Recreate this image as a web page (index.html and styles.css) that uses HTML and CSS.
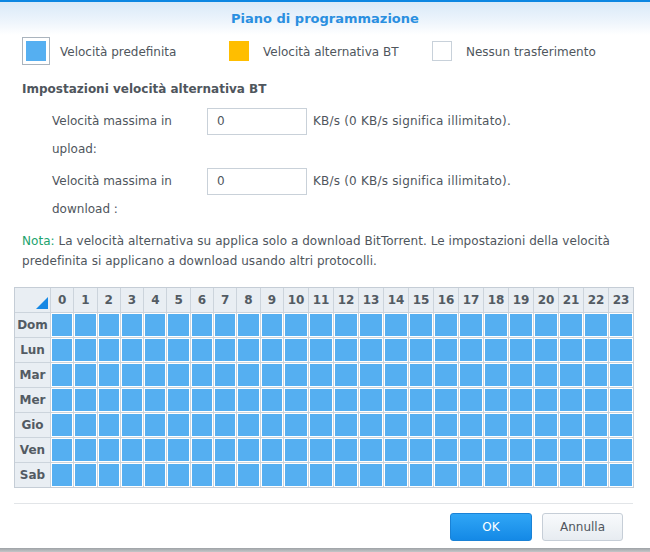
FILE: index.html
```html
<!DOCTYPE html>
<html lang="it">
<head>
<meta charset="utf-8">
<title>Piano di programmazione</title>
<link rel="stylesheet" href="styles.css">
</head>
<body>
<div class="dialog">
  <div class="topbar"></div>
  <div class="header">Piano di programmazione</div>

  <div class="legend">
    <div class="legend-item">
      <span class="swatch-wrap selected"><span class="swatch blue"></span></span>
      <span class="legend-text">Velocità predefinita</span>
    </div>
    <div class="legend-item">
      <span class="swatch-wrap"><span class="swatch orange"></span></span>
      <span class="legend-text">Velocità alternativa BT</span>
    </div>
    <div class="legend-item">
      <span class="swatch-wrap"><span class="swatch empty"></span></span>
      <span class="legend-text">Nessun trasferimento</span>
    </div>
  </div>

  <div class="section-title">Impostazioni velocità alternativa BT</div>

  <div class="form">
    <div class="form-row">
      <div class="form-label">Velocità massima in upload:</div>
      <div class="input">0</div>
      <div class="unit">KB/s (0 KB/s significa illimitato).</div>
    </div>
    <div class="form-row">
      <div class="form-label">Velocità massima in download :</div>
      <div class="input">0</div>
      <div class="unit">KB/s (0 KB/s significa illimitato).</div>
    </div>
  </div>

  <p class="note"><span class="note-key">Nota:</span> La velocità alternativa su applica solo a download BitTorrent. Le impostazioni della velocità predefinita si applicano a download usando altri protocolli.</p>

  <div class="schedule" id="schedule">
    <div class="corner"><svg class="corner-tri" width="12" height="12" viewBox="0 0 12 12"><polygon points="0,12 12,12 12,0" fill="#1688e4"/></svg></div>
    <div class="hcell">0</div><div class="hcell">1</div><div class="hcell">2</div><div class="hcell">3</div><div class="hcell">4</div><div class="hcell">5</div><div class="hcell">6</div><div class="hcell">7</div><div class="hcell">8</div><div class="hcell">9</div><div class="hcell">10</div><div class="hcell">11</div><div class="hcell">12</div><div class="hcell">13</div><div class="hcell">14</div><div class="hcell">15</div><div class="hcell">16</div><div class="hcell">17</div><div class="hcell">18</div><div class="hcell">19</div><div class="hcell">20</div><div class="hcell">21</div><div class="hcell">22</div><div class="hcell">23</div>
  </div>

  <div class="footer">
    <button class="btn btn-primary">OK</button>
    <button class="btn btn-default">Annulla</button>
  </div>
</div>
<div class="desk-strip"></div>
<script src="app.js"></script>
</body>
</html>
```

FILE: app.js
```js
(function () {
  var days = ["Dom", "Lun", "Mar", "Mer", "Gio", "Ven", "Sab"];
  var grid = document.getElementById("schedule");
  days.forEach(function (d) {
    var label = document.createElement("div");
    label.className = "dcell";
    label.textContent = d;
    grid.appendChild(label);
    for (var h = 0; h < 24; h++) {
      var c = document.createElement("div");
      c.className = "slot";
      var inner = document.createElement("span");
      inner.className = "slot-fill";
      c.appendChild(inner);
      grid.appendChild(c);
    }
  });
})();
```

FILE: styles.css
```css
html, body {
  margin: 0;
  padding: 0;
}
body {
  width: 650px;
  height: 552px;
  overflow: hidden;
  background: #ffffff;
  font-family: "DejaVu Sans", Verdana, sans-serif;
  font-size: 12px;
  color: #4f565d;
}
.dialog {
  height: 548px;
  background: #ffffff;
  display: flex;
  flex-direction: column;
}
.topbar {
  height: 2px;
  background: #0c86e2;
}
.header {
  height: 33px;
  line-height: 33px;
  text-align: center;
  font-weight: bold;
  font-size: 13px;
  color: #2a8fe0;
  background: linear-gradient(to bottom, #d9e9f8 0%, #eef5fc 60%, #ffffff 100%);
}
.legend {
  display: flex;
  padding-left: 22px;
  margin-top: 2px;
}
.legend-item {
  display: flex;
  align-items: center;
  width: 203px;
}
.swatch-wrap {
  box-sizing: border-box;
  width: 28px;
  height: 28px;
  padding: 3px;
  border: 1px solid transparent;
  display: flex;
}
.swatch-wrap.selected {
  border-color: #aab4be;
}
.swatch {
  width: 20px;
  height: 20px;
  box-sizing: border-box;
}
.swatch.blue { background: #55aff1; }
.swatch.orange { background: #ffbe00; }
.swatch.empty { background: #ffffff; border: 1px solid #c8d1da; }
.legend-text {
  margin-left: 10px;
  padding-top: 2px;
}
.section-title {
  margin-top: 14px;
  padding-left: 22px;
  line-height: 20px;
  font-weight: bold;
}
.form {
  margin-top: 8px;
  padding-left: 52px;
  display: flex;
  flex-direction: column;
  gap: 4px;
}
.form-row {
  display: flex;
  align-items: flex-start;
}
.form-label {
  width: 136px;
  margin-right: 19px;
  line-height: 28px;
}
.input {
  box-sizing: border-box;
  width: 100px;
  height: 27px;
  margin-top: 1px;
  border: 1px solid #c9d1d9;
  padding-left: 9px;
  line-height: 25px;
  color: #4f565d;
}
.unit {
  margin-left: 6px;
  line-height: 28px;
  letter-spacing: 0.2px;
}
.note {
  margin: 8px 0 0 0;
  padding: 0 20px 0 22px;
  line-height: 20px;
  letter-spacing: 0.05px;
}
.note-key {
  color: #21a36d;
}
.schedule {
  margin: 16px 0 0 14px;
  width: 620px;
  box-sizing: border-box;
  display: grid;
  grid-template-columns: 35px repeat(10, 1fr) repeat(14, 24px);
  grid-template-rows: 24px repeat(7, 24px);
  gap: 1px;
  background: #ccd4dc;
  border: 1px solid #c5cdd6;
}
.corner {
  background: #e9eef3;
  display: flex;
  justify-content: flex-end;
  align-items: flex-end;
  padding: 0 2px 3px 0;
}
.corner-tri {
  display: block;
}
.hcell, .dcell {
  background: #e9eef3;
  font-weight: bold;
  color: #535b63;
  display: flex;
  align-items: center;
  justify-content: center;
}
.slot {
  background: #ffffff;
  padding: 1px;
  display: flex;
}
.slot-fill {
  flex: 1;
  background: #55aff1;
}
.footer {
  margin: 15px 17px 0 14px;
  border-top: 1px solid #e2e5e8;
  display: flex;
  justify-content: flex-end;
  gap: 10px;
  padding: 9px 10px 0 0;
}
.btn {
  box-sizing: border-box;
  height: 28px;
  border-radius: 3px;
  font-family: "DejaVu Sans", Verdana, sans-serif;
  font-size: 12px;
  padding: 0;
  cursor: pointer;
}
.btn-primary {
  width: 82px;
  color: #ffffff;
  background: linear-gradient(to bottom, #30a6f6 0%, #1489e6 100%);
  border: 1px solid #1a82d6;
}
.btn-default {
  width: 81px;
  color: #4f565d;
  background: linear-gradient(to bottom, #f8fafc 0%, #e7ecf1 100%);
  border: 1px solid #c6ced7;
}
.desk-strip {
  height: 4px;
  background: linear-gradient(to bottom, #9ea2a6 0%, #c4c6c8 100%);
}
```
